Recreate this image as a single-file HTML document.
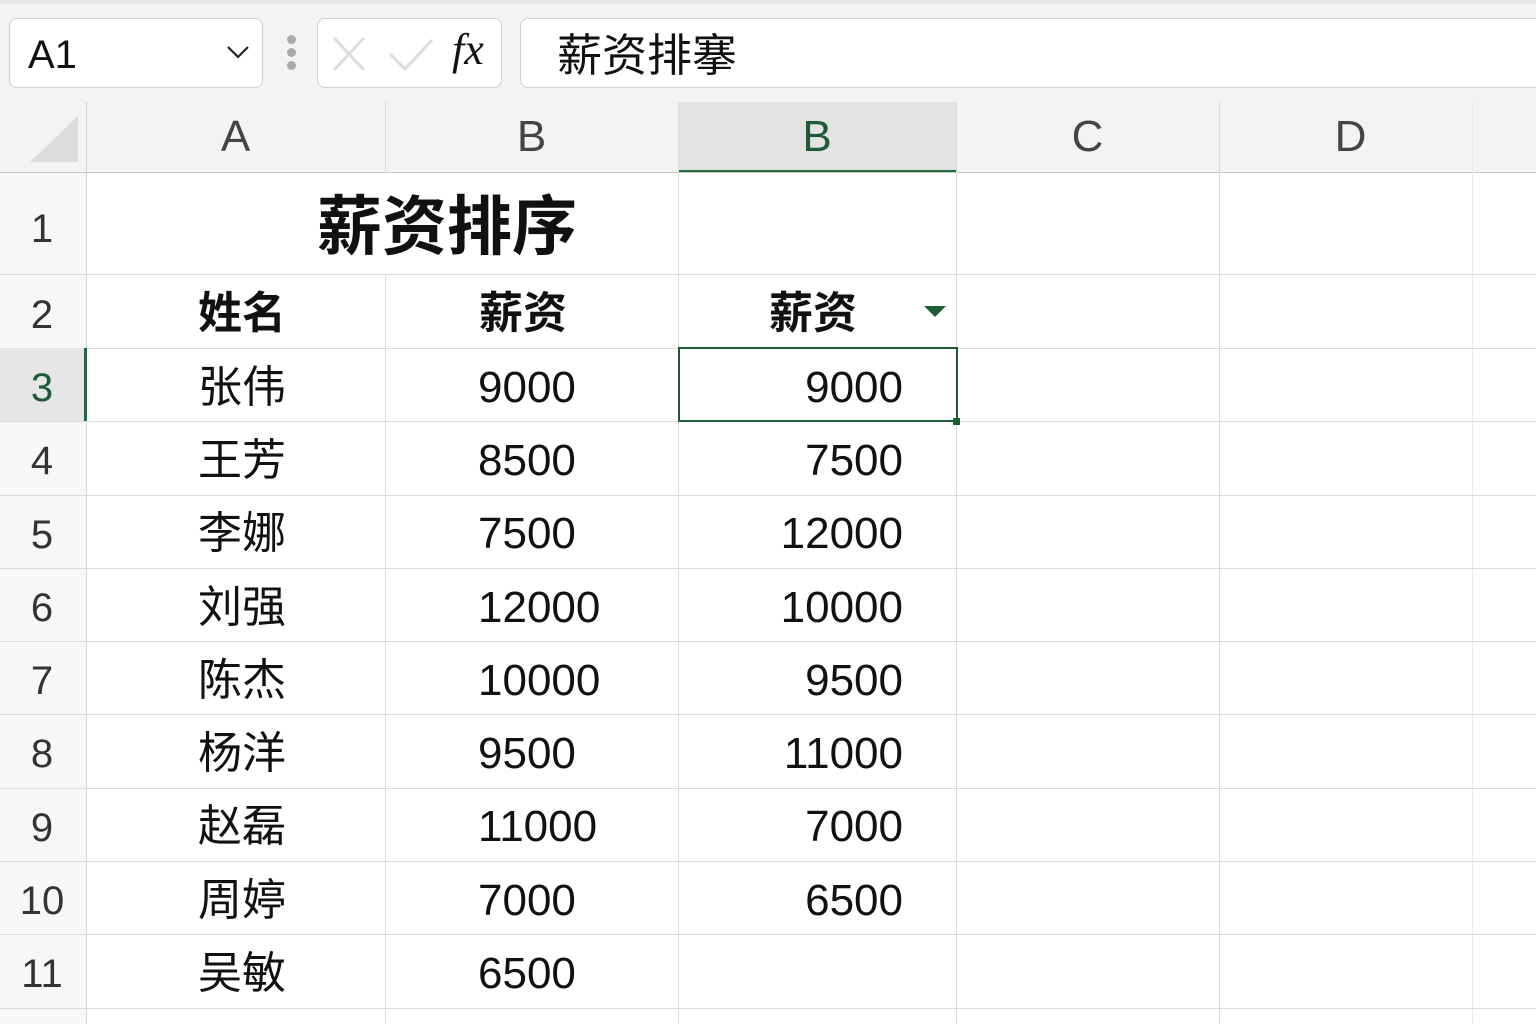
<!DOCTYPE html>
<html><head><meta charset="utf-8"><style>
*{margin:0;padding:0;box-sizing:border-box}
body{width:1536px;height:1024px;overflow:hidden;background:#fff;font-family:"Liberation Sans","Noto Sans CJK SC",sans-serif;position:relative}
.a{position:absolute}
.hl{position:absolute;height:1px;background:#dadada;left:0;width:1536px}
.vl{position:absolute;width:1px;background:#dadada;top:102px;height:922px}
.t{position:absolute;font-size:44px;color:#111;line-height:1;white-space:nowrap}
.rn{position:absolute;left:0;width:84px;text-align:center;font-size:40px;color:#333;line-height:1}
.ch{position:absolute;top:115px;font-size:44px;color:#444;line-height:1;text-align:center}
</style></head><body>
<div class="a" style="left:0;top:0;width:1536px;height:172px;background:#f3f3f3"></div>
<div class="a" style="left:0;top:0;width:1536px;height:4px;background:#e8e8e8"></div>
<div class="a" style="left:0;top:172px;width:86px;height:852px;background:#f7f7f7"></div>
<div class="a" style="left:9px;top:18px;width:254px;height:70px;background:#fff;border:1px solid #cfcfcf;border-radius:8px"></div>
<div class="t" style="left:28px;top:35px;font-size:40px">A1</div>
<svg class="a" style="left:226px;top:44px" width="24" height="16"><path d="M2 3 L12 13 L22 3" stroke="#222" stroke-width="2.2" fill="none"/></svg>
<div class="a" style="left:287px;top:35px;width:9px;height:9px;border-radius:50%;background:#aaa"></div>
<div class="a" style="left:287px;top:48px;width:9px;height:9px;border-radius:50%;background:#aaa"></div>
<div class="a" style="left:287px;top:61px;width:9px;height:9px;border-radius:50%;background:#aaa"></div>
<div class="a" style="left:317px;top:18px;width:185px;height:70px;background:#fff;border:1px solid #cfcfcf;border-radius:8px"></div>
<svg class="a" style="left:330px;top:34px" width="150" height="40"><path d="M4 4 L34 36 M34 4 L4 36" stroke="#ddd" stroke-width="3" fill="none"/><path d="M60 20 L75 35 L102 6" stroke="#ddd" stroke-width="3" fill="none"/></svg>
<div class="t" style="left:452px;top:28px;font-family:'Liberation Serif',serif;font-style:italic;font-size:44px">fx</div>
<div class="a" style="left:520px;top:18px;width:1030px;height:70px;background:#fff;border:1px solid #cfcfcf;border-radius:8px"></div>
<div class="t" style="left:557px;top:33px;font-size:45px">薪资排搴</div>
<div class="a" style="left:678px;top:102px;width:278px;height:70px;background:#e3e3e3"></div>
<div class="a" style="left:678px;top:170px;width:278px;height:3px;background:#1e6b3c"></div>
<svg class="a" style="left:28px;top:114px" width="52" height="50"><path d="M50 2 L50 48 L2 48 Z" fill="#dcdcdc"/></svg>
<div class="hl" style="top:172px;background:#c8c8c8"></div>
<div class="vl" style="left:86px;background:#cfcfcf"></div>
<div class="vl" style="left:385px"></div>
<div class="vl" style="left:678px"></div>
<div class="vl" style="left:956px"></div>
<div class="vl" style="left:1219px"></div>
<div class="vl" style="left:1472px;background:#e8e8e8"></div>
<div class="ch" style="left:86px;width:299px">A</div>
<div class="ch" style="left:385px;width:293px">B</div>
<div class="ch" style="left:678px;width:278px;color:#1e5b36">B</div>
<div class="ch" style="left:956px;width:263px">C</div>
<div class="ch" style="left:1219px;width:263px">D</div>
<div class="hl" style="top:274px"></div><div class="hl" style="top:348px"></div><div class="hl" style="top:421px"></div><div class="hl" style="top:495px"></div><div class="hl" style="top:568px"></div><div class="hl" style="top:641px"></div><div class="hl" style="top:714px"></div><div class="hl" style="top:788px"></div><div class="hl" style="top:861px"></div><div class="hl" style="top:934px"></div><div class="hl" style="top:1008px"></div>
<div class="a" style="left:0;top:348px;width:86px;height:73px;background:#e6e6e6"></div>
<div class="a" style="left:84px;top:348px;width:3px;height:73px;background:#1e6b3c"></div>
<div class="rn" style="top:209px">1</div>
<div class="rn" style="top:295px">2</div>
<div class="rn" style="top:368px;color:#1e5b36">3</div>
<div class="rn" style="top:441px">4</div>
<div class="rn" style="top:515px">5</div>
<div class="rn" style="top:588px">6</div>
<div class="rn" style="top:661px">7</div>
<div class="rn" style="top:734px">8</div>
<div class="rn" style="top:808px">9</div>
<div class="rn" style="top:881px">10</div>
<div class="rn" style="top:954px">11</div>
<div class="a" style="left:87px;top:173px;width:591px;height:101px;background:#fff"></div>
<div class="t" style="left:317px;top:194px;font-size:65px;font-weight:bold">薪资排序</div>
<div class="t" style="left:198px;top:292px;font-weight:bold">姓名</div>
<div class="t" style="left:479px;top:292px;font-weight:bold">薪资</div>
<div class="t" style="left:769px;top:292px;font-weight:bold">薪资</div>
<svg class="a" style="left:924px;top:306px" width="22" height="12"><path d="M0 0 L22 0 L11 11 Z" fill="#1e5b36"/></svg>
<div class="a" style="left:678px;top:347px;width:280px;height:75px;border:2px solid #1e5b36"></div>
<div class="a" style="left:953px;top:418px;width:7px;height:7px;background:#1e5b36"></div>
<div class="t" style="left:198px;top:366px">张伟</div><div class="t" style="left:478px;top:366px">9000</div><div class="t" style="left:600px;top:366px;width:303px;text-align:right">9000</div>
<div class="t" style="left:198px;top:439px">王芳</div><div class="t" style="left:478px;top:439px">8500</div><div class="t" style="left:600px;top:439px;width:303px;text-align:right">7500</div>
<div class="t" style="left:198px;top:512px">李娜</div><div class="t" style="left:478px;top:512px">7500</div><div class="t" style="left:600px;top:512px;width:303px;text-align:right">12000</div>
<div class="t" style="left:198px;top:586px">刘强</div><div class="t" style="left:478px;top:586px">12000</div><div class="t" style="left:600px;top:586px;width:303px;text-align:right">10000</div>
<div class="t" style="left:198px;top:659px">陈杰</div><div class="t" style="left:478px;top:659px">10000</div><div class="t" style="left:600px;top:659px;width:303px;text-align:right">9500</div>
<div class="t" style="left:198px;top:732px">杨洋</div><div class="t" style="left:478px;top:732px">9500</div><div class="t" style="left:600px;top:732px;width:303px;text-align:right">11000</div>
<div class="t" style="left:198px;top:805px">赵磊</div><div class="t" style="left:478px;top:805px">11000</div><div class="t" style="left:600px;top:805px;width:303px;text-align:right">7000</div>
<div class="t" style="left:198px;top:879px">周婷</div><div class="t" style="left:478px;top:879px">7000</div><div class="t" style="left:600px;top:879px;width:303px;text-align:right">6500</div>
<div class="t" style="left:198px;top:952px">吴敏</div><div class="t" style="left:478px;top:952px">6500</div>
</body></html>
